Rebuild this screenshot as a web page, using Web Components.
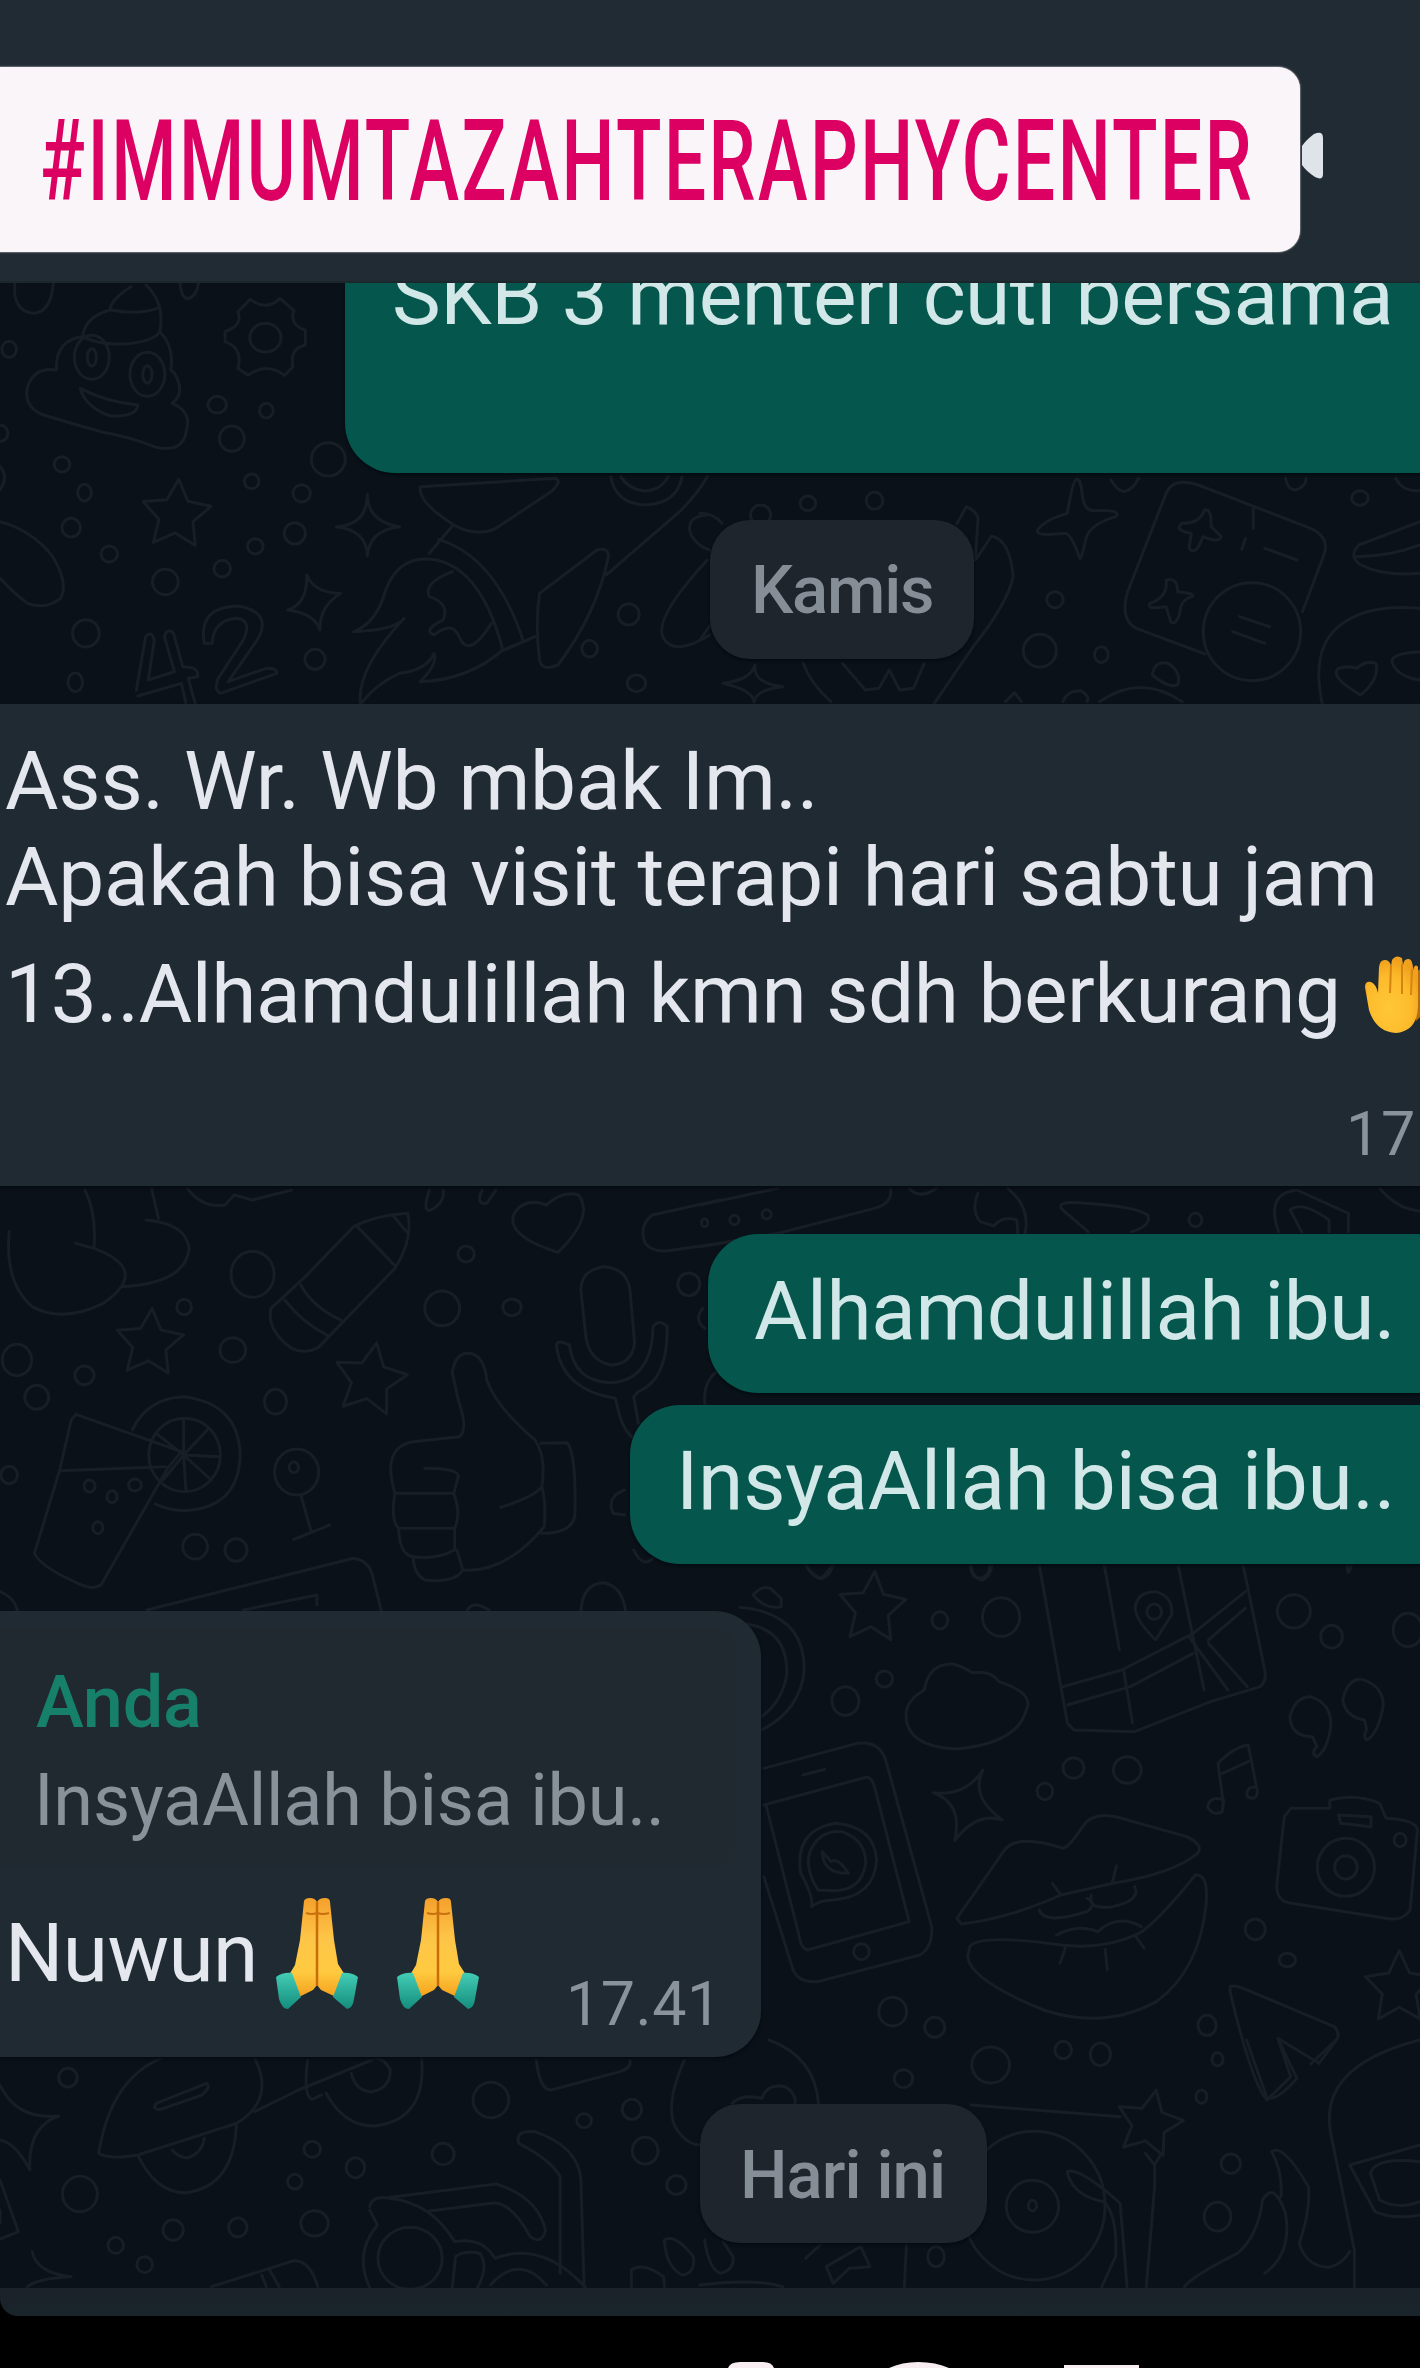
<!DOCTYPE html>
<html lang="id">
<head>
<meta charset="utf-8">
<title>Percakapan</title>
<style>
html,body{margin:0;background:#000}
body{width:1420px;height:2368px;overflow:hidden;font-family:Roboto,"Noto Sans",sans-serif}
</style>
</head>
<body>
<chat-screen></chat-screen>
<script>
const define = (name, html, setup) => {
  const t = document.createElement('template');
  t.innerHTML = html;
  customElements.define(name, class extends HTMLElement {
    connectedCallback() {
      if (this.shadowRoot) return;
      this.attachShadow({mode: 'open'}).append(t.content.cloneNode(true));
      if (setup) setup(this, this.shadowRoot);
    }
  });
};

/* One line of text whose visible glyphs span exactly `w` pixels. */
const ctx = document.createElement('canvas').getContext('2d');
customElements.define('fit-text', class extends HTMLElement {
  connectedCallback() {
    if (this.shadowRoot) return;
    const size = +this.getAttribute('size'), w = +this.getAttribute('w');
    const weight = this.getAttribute('weight') || 400, lh = this.getAttribute('lh');
    const sx = +(this.getAttribute('sx') || 1);
    const text = this.getAttribute('text');
    ctx.font = `${weight} ${size}px Roboto`;
    const m = ctx.measureText(text);
    const ink = m.actualBoundingBoxLeft + m.actualBoundingBoxRight;
    const ls = (w / sx - ink) / (text.length - 1);
    this.attachShadow({mode: 'open'}).innerHTML = `<style>
      :host{display:block;flex:none;width:${w}px;height:${lh}px;white-space:pre}
      span{display:block;width:max-content;font:${weight} ${size}px/${lh}px Roboto,sans-serif;letter-spacing:${ls}px;
        margin-left:${m.actualBoundingBoxLeft * sx}px;transform:scaleX(${sx});transform-origin:0 0}
    </style><span></span>`;
    this.shadowRoot.querySelector('span').textContent = text;
  }
});

/* Doodle wallpaper: groups of line drawings, each in its own coordinate frame. */
const star = (x, y, r, a = 0, k = 1.38) => {
  let d = '';
  for (let i = 0; i < 10; i++) {
    const q = (a - 90 + i * 36) * Math.PI / 180, s = i % 2 ? r * .5 : r;
    d += (i ? 'L' : 'M') + (x + Math.cos(q) * s).toFixed(1) + ' ' + (y + Math.sin(q) * s * k).toFixed(1);
  }
  return d + 'Z';
};
const doodles = [
  {t: 'translate(0 270) scale(.4592 .33333)',
   c: [[20,238,16,24],[473,404,20,25],[580,422,15,22],[505,506,27,38],[715,568,37,50],[135,583,17,23],[184,668,15,25],[548,634,16,22],[657,670,19,26],[155,773,20,28],[238,852,18,24],[556,829,17,23],[642,790,23,32],[360,936,28,38],[484,896,18,25],[187,1090,29,41],[686,1168,22,30],[164,1237,16,28],[1369,1033,23,32],[1284,1136,17,25],[1386,1240,20,25],[578,203,34,43],[200,262,38,66],[321,313,38,66],[200,262,10,26],[321,313,10,26],[2,490,15,24]],
   p: [star(384,735,78,4),
    'M32 40V75Q40 128 75 130Q112 122 116 40M392 40Q395 85 410 87Q430 75 432 40',
    'M285 50Q240 90 240 120Q185 140 180 200Q120 210 123 300Q75 290 60 350Q50 410 95 435Q155 460 225 487Q280 500 340 532Q400 550 406 480Q418 425 375 400Q405 370 380 310L372 300Q380 230 348 185Q360 100 318 45M240 120Q300 135 342 115M180 200Q215 225 270 222Q335 215 348 185M175 355Q230 395 300 405Q300 440 240 438Q185 410 175 355Z',
    'M518 125L545 88Q580 125 610 85L640 122Q630 165 665 180V225Q630 235 638 290L620 316Q580 275 540 316L518 295Q530 235 490 215V185Q530 165 518 125Z',
    'M800 672Q800 755 870 770Q805 780 800 857Q798 780 732 770Q800 765 800 672ZM668 915Q685 970 742 970Q695 1010 697 1080Q685 1030 627 1020Q670 1000 668 915Z',
    'M0 755Q70 780 115 860Q150 940 132 985Q100 1020 60 1000Q30 970 0 925M0 590Q20 620 0 660',
    'M297 1260L317 1100Q330 1080 336 1110L323 1230L380 1205L358 1100Q365 1070 378 1090L398 1190Q435 1190 430 1220L410 1225L425 1300M300 1278L395 1240L405 1300M445 1120Q430 1010 520 1008Q600 1030 555 1120L497 1235L580 1195Q605 1195 603 1210L480 1270Q465 1260 475 1225L530 1110Q550 1050 515 1045Q465 1050 462 1120Z',
    'M915 650L1210 625Q1225 635 1200 665L1080 775Q1040 800 995 770Q910 700 915 650ZM985 768L935 850M770 1085Q820 1060 840 960Q870 850 950 870Q1050 900 1095 1140Q1020 1230 915 1235Q955 1180 945 1150Q930 1200 870 1210Q820 1240 785 1302Q775 1200 880 1045Q860 1080 770 1085ZM955 808Q1080 860 1140 1115L1095 1140M1165 1100L1100 1140M985 905Q920 940 935 980Q980 1000 965 1050Q920 1080 945 1095Q985 1050 1000 1100Q1020 1170 1070 1060',
    'M1175 970L1300 840Q1325 830 1325 860Q1300 1030 1215 1185Q1180 1205 1175 1170Q1165 1060 1175 970ZM1320 915L1480 725Q1520 670 1540 620M1330 620Q1340 700 1405 705Q1475 700 1485 620M1352 620Q1370 660 1405 663Q1440 660 1455 620M1540 870Q1420 1050 1445 1105Q1470 1160 1545 1095M1540 735Q1490 740 1505 795Q1520 830 1545 840']},
  {t: 'translate(700 450) scale(.4592 .33333)',
   c: [[235,160,17,22],[380,152,18,26],[773,449,18,24],[740,602,36,49],[874,614,15,24],[1437,144,18,22],[1202,545,106,147],[132,195,22,30]],
   p: ['M820 88C840 88 820 185 860 182C905 178 915 190 905 200Q845 225 840 270Q830 330 827 325Q808 250 795 250Q730 260 735 240Q750 210 800 190Q812 90 820 88Z',
    'M1015 130Q1030 80 1085 105L1330 235Q1370 260 1360 310L1312 485M1015 130L930 430Q915 510 950 535L1100 612M1205 175V235M1188 265L1180 298',
    'M1098 180Q1115 175 1113 230L1135 260Q1130 280 1095 260Q1080 320 1065 295L1070 250Q1030 240 1050 220Q1090 220 1098 180ZM1015 390Q1040 380 1040 425Q1080 430 1072 440Q1045 450 1045 490Q1035 530 1025 515L1015 470Q970 480 980 460Q1020 440 1015 390ZM1230 295L1300 330M1175 500L1240 530M1160 545L1230 580',
    'M895 90Q910 125 925 125Q945 115 955 85M1275 85Q1280 120 1297 120Q1320 110 1320 85M1515 85Q1530 125 1568 122M560 220L580 170Q610 190 605 215L600 320M600 330L635 258Q675 270 682 380Q670 460 595 590L510 760M225 640Q240 700 285 755M310 640L360 720L390 715L412 660L435 720L465 715L488 640M120 645Q115 700 180 710Q120 720 118 757Q115 720 50 700Q110 690 120 645Z',
    'M1355 760Q1330 600 1390 530Q1450 460 1568 475M1438 735Q1370 680 1390 655Q1415 645 1430 655Q1450 630 1472 640Q1480 690 1438 735ZM1568 605Q1500 610 1508 640Q1520 680 1568 690M1568 215L1435 285Q1410 320 1440 345Q1490 380 1568 370M1430 320Q1500 320 1568 285M985 675Q990 630 1020 640Q1050 670 1040 705Q1020 715 985 675ZM870 755Q960 670 1050 755M790 755Q800 720 830 722Q850 740 843 755M665 755L685 728L700 755M0 190Q30 190 48 220M0 570L25 520']},
  {t: 'translate(0 1180) scale(.4592 .33333)',
   c: [[550,283,47,69],[401,381,16,23],[507,510,28,37],[37,540,32,47],[184,586,21,28],[80,652,26,36],[600,665,24,37],[1015,222,18,24],[963,385,38,52],[1115,382,20,25],[1500,313,24,34],[20,885,18,26],[425,1100,27,37],[514,1110,24,34],[646,876,48,69],[640,862,10,16],[402,825,78,110],[195,918,12,18],[294,915,14,18],[244,950,11,18],[213,1043,11,18]],
   p: [star(326,490,76,4),star(806,600,82,10),
    'M288 750Q320 655 400 650Q520 670 523 825Q520 985 400 992Q365 990 338 972',
    'M20 155Q10 310 70 380Q135 430 225 370Q330 270 205 205L165 190M205 200Q210 100 185 30M265 320Q405 310 412 205Q405 130 318 120M345 115L330 25M408 25Q440 85 490 75L510 45L550 60L635 30',
    'M770 140L665 290L590 385Q580 450 635 505Q665 525 695 500L860 265Q900 180 888 100Q820 105 770 140ZM778 140L862 260M655 315Q680 380 742 420M620 360Q660 430 712 465M855 105L885 155',
    'M1215 217Q1105 170 1118 105Q1140 50 1190 75Q1225 30 1260 45Q1295 110 1215 217ZM1568 60L1420 105Q1390 140 1405 190Q1420 215 1450 213L1568 190',
    'M1265 330Q1265 270 1315 260Q1365 265 1372 330L1382 490Q1375 555 1330 555Q1280 540 1275 460ZM1212 500Q1210 475 1240 495Q1250 605 1330 608Q1420 600 1422 440Q1435 415 1453 440Q1455 600 1390 635L1380 650L1390 730M1212 500Q1225 630 1340 655L1350 710Q1360 750 1375 770',
    'M985 580Q990 515 1025 520Q1055 530 1060 600Q1080 680 1165 780Q1190 830 1180 920Q1190 970 1185 1040Q1100 1180 1008 1170Q990 1210 925 1200Q900 1180 900 1130Q870 1125 868 1045Q850 1020 860 940Q830 800 900 785L1000 770Q1020 750 1000 670ZM925 865Q1000 865 998 890L988 940H860M988 940Q1005 1000 990 1045L868 1045M990 1050V1110Q950 1140 900 1130M995 1110L1008 1170M1180 920Q1165 950 1090 982M1178 790L1235 788Q1255 820 1252 1000Q1250 1060 1180 1060',
    'M165 703L395 815L365 865L220 1215Q200 1235 155 1200Q90 1160 75 1120L130 870L155 720ZM130 872L360 860M400 825V720M400 825L455 745M400 825L478 830M400 825L460 900M400 825L405 935M400 825L355 900M400 825L340 760M655 945L678 1055M640 1078L718 1035',
    'M320 1290L770 1135Q800 1140 810 1180L830 1290M530 1290L690 1245V1275M1265 1290Q1270 1210 1315 1208Q1355 1220 1362 1290M0 1235Q30 1250 38 1290M1018 1290Q1030 1260 1065 1290M935 30Q920 90 935 92Q970 70 965 30M1050 30Q1035 75 1060 70L1080 30M1535 670Q1530 610 1560 575M1530 385Q1510 420 1535 445M1360 930Q1320 950 1335 1000L1360 1005M1380 1110Q1400 1170 1425 1130']},
  {t: 'translate(740 1550) scale(.4337 .33333)',
   c: [[461,211,18,26],[602,201,43,58],[333,387,19,24],[243,453,31,43],[1277,184,38,50],[1364,260,25,34],[769,654,24,31],[893,660,32,40],[703,724,18,25],[1188,1138,23,31],[1262,1230,19,20],[352,1385,32,43],[449,1432,23,30],[1077,1426,21,30],[1540,240,34,50],[955,185,17,23],[1397,952,66,87],[1397,952,26,35],[1522,870,14,20],[280,1205,18,24]],
   p: [star(305,175,80,4),star(1520,1315,82,0),
    'M0 172Q150 190 148 360Q140 480 50 540M0 220Q110 230 108 370Q100 450 50 500M30 135Q50 105 70 115L95 145V170Q60 180 30 135ZM150 45Q175 85 190 85Q210 75 213 45M530 45Q540 90 560 90Q580 75 580 45',
    'M425 420Q435 340 490 342Q515 350 535 368Q580 360 597 395Q680 430 660 480Q640 580 500 597Q380 590 383 490Q385 450 425 420Z',
    'M690 45L755 520L770 540L910 545L1085 455L1200 410Q1215 390 1210 360L1160 45M745 410L880 360L1045 250L1165 125M755 465L900 410L1045 310M840 45L875 300M885 365L905 520M1010 45L1070 420M1035 260L1125 420M1080 280L1170 410M1080 270L1165 175M958 270Q905 200 912 165Q920 125 958 125Q1000 140 995 195Z',
    'M1320 560Q1270 560 1268 500Q1280 440 1315 440Q1365 460 1362 530Q1355 600 1330 620Q1315 610 1330 590ZM1440 510Q1395 500 1390 450Q1400 385 1435 388Q1485 410 1483 470Q1470 555 1445 570Q1435 560 1445 540Z',
    'M1115 765L1102 640Q1140 590 1172 585L1193 725M1112 670L1172 635M1115 750Q1085 735 1078 770Q1090 800 1112 785ZM1190 710Q1165 710 1170 740Q1190 755 1193 725',
    'M55 655L270 580Q325 570 338 640L442 1130Q445 1190 415 1215L180 1295Q130 1300 120 1250L55 980M55 765L290 682Q305 680 312 720L390 1115L155 1200Q140 1195 135 1150L60 765M145 675L195 658M165 1070Q170 1040 140 970Q125 840 220 820Q310 830 315 930Q310 1040 215 1050Q185 1050 165 1070ZM180 1020Q150 960 160 910Q180 840 235 845Q290 870 290 940Q280 1020 220 1022ZM190 905Q190 970 250 970Q225 920 210 935Z',
    'M560 660Q530 740 605 810Q545 785 495 872Q515 760 445 728Q520 740 560 660Z',
    'M500 1105L610 900Q640 850 745 895Q760 890 790 830Q815 780 880 805L1030 860Q1070 885 1055 910Q1000 970 860 1000L740 1035Q620 1105 510 1122ZM530 1190Q550 1150 740 1185Q840 1200 920 1150Q960 1120 1050 975Q1080 970 1075 1060Q1060 1260 960 1355Q840 1440 700 1380Q530 1290 525 1220ZM720 1000L740 1035M868 948L858 1000M690 1080Q700 1125 800 1085Q825 1060 800 1045M810 1035Q800 1080 860 1070Q925 1050 910 1010M730 1155Q780 1120 825 1145Q870 1090 925 1130M750 1195L738 1240M842 1198L847 1260M910 1155L932 1195',
    'M1270 775H1360V750Q1420 730 1475 760L1490 805Q1560 810 1562 840L1545 1080Q1530 1110 1500 1107L1265 1058Q1235 1050 1238 1000L1255 800ZM1380 795L1455 800V830L1385 820ZM1130 1310Q1140 1305 1160 1315L1370 1430Q1385 1450 1375 1470L1335 1540L1240 1465L1270 1580L1215 1650Q1180 1600 1130 1325ZM1400 45Q1400 90 1410 45']},
  {t: 'translate(0 2040) scale(.4592 .33333)',
   c: [[148,113,20,28],[174,462,38,53],[1069,180,39,53],[1272,242,16,21],[1376,208,21,30],[680,328,18,24],[774,383,20,30],[965,342,24,32],[642,425,16,22],[1405,332,28,40],[1473,435,21,28],[377,570,22,31],[518,562,20,28],[685,550,30,38],[252,616,17,24],[315,674,17,24],[893,655,70,93]],
   p: ['M350 55Q240 120 215 340Q235 360 300 345L515 250Q600 180 555 55M555 215L650 150L810 60M340 190L450 130Q460 140 440 165L350 208Q330 210 340 190ZM300 345Q340 460 405 458Q510 440 515 250M375 330Q390 355 410 353Q440 340 445 295M670 60Q660 170 680 178L700 165M710 160Q750 260 815 258Q930 240 918 55M765 100Q775 155 810 155Q850 145 850 90Q840 60 820 55',
    'M0 135Q35 240 128 228Q60 260 65 390Q35 310 0 300M0 420L40 575L0 597M0 510V550M70 635Q80 700 155 710Q80 715 60 740',
    'M1168 60Q1175 150 1200 150L1350 95Q1375 85 1372 60M1490 60Q1440 220 1480 280Q1500 315 1525 315',
    'M1220 700L1220 410Q1200 360 1130 310Q1120 270 1165 275Q1260 320 1265 420L1272 740M805 500Q810 465 850 475Q940 490 990 605Q1050 590 1078 655Q1180 600 1275 742M850 472L1080 432Q1170 470 1188 570Q1180 615 1155 590Q1110 480 1070 490L935 513M805 510L822 555Q770 640 805 742M985 742L992 650Q1010 630 1045 640Q1065 680 1040 742M1068 735Q1130 640 1190 735',
    'M460 740L640 662Q675 660 692 740M585 685L608 740M570 705L580 740M1447 600Q1470 580 1510 650Q1515 700 1485 705Q1450 680 1447 600ZM1375 690Q1400 665 1445 710L1447 740M1375 690V740']},
  {t: 'translate(700 2040) scale(.4592 .33333)',
   c: [[443,116,20,27],[633,75,41,54],[791,30,18,26],[872,43,22,34],[1156,371,21,29],[1127,530,29,43],[1127,58,12,20],[1092,170,12,20],[514,650,18,30],[727,497,155,223],[724,499,57,78],[724,497,9,16]],
   p: [star(978,252,75,12),
    'M150 0Q250 50 258 190M70 190Q90 160 135 175Q145 130 185 140Q210 160 207 190M590 195L915 230M1190 0L1235 175Q1260 180 1300 115L1260 0M1330 72L1385 0',
    'M990 370V440L972 740M970 340L990 375L1005 340M800 395Q825 380 915 490L930 740M800 400Q815 470 880 485Q910 530 905 650L875 740M1568 0Q1340 80 1375 290L1425 630V740M1568 315L1415 375L1470 515Q1510 540 1568 525M1568 365Q1470 350 1460 400L1480 480Q1520 510 1568 485',
    'M1245 335Q1270 310 1325 440Q1330 510 1305 610Q1320 680 1370 682Q1400 670 1415 635M1055 740Q1070 710 1170 640Q1215 590 1225 480Q1250 420 1275 520Q1290 640 1230 700M1245 335Q1270 400 1265 470M230 655L265 610M350 620L370 680L325 685L290 730L275 680ZM450 605L445 740M10 600Q20 690 45 700Q75 690 72 650L50 605M0 735Q120 715 180 740']},
  {t: 'translate(700 1180) scale(.4592 .33333)', c: [[1079,120,14,20],[10,128,7,12],[75,120,10,14],[145,103,10,14]],
   p: ['M0 75L170 25M415 25Q420 70 380 85L170 160L0 200M455 25Q480 60 515 25M605 40Q590 90 610 125L640 138Q660 105 690 120L692 160M670 25Q720 80 708 160M845 155L790 90Q770 60 840 70Q950 80 975 105Q985 135 940 155M1260 155Q1230 40 1300 30L1412 100V155M1310 155L1285 90Q1310 60 1370 120V155M1480 25Q1520 90 1568 93M230 1155Q250 1200 265 1195L290 1155M590 1155Q590 1195 610 1195Q630 1190 632 1155']}
];
define('doodle-wallpaper', `<style>
  :host{display:block;position:absolute;inset:0}
  svg{display:block;width:1420px;height:2005px;fill:none;stroke:#171e26;stroke-width:3;stroke-linejoin:round;stroke-linecap:round}
  path,ellipse{vector-effect:non-scaling-stroke}
</style><svg viewBox="0 283 1420 2005" aria-hidden="true"></svg>`, (el, root) => {
  root.querySelector('svg').innerHTML = doodles.map(g => `<g transform="${g.t}">` +
    g.c.map(([x, y, a, b]) => `<ellipse cx="${x}" cy="${y}" rx="${a}" ry="${b}"/>`).join('') +
    g.p.map(d => `<path d="${d}"/>`).join('') + '</g>').join('');
});

define('hashtag-sticker', `<style>
  :host{display:flex;box-sizing:border-box;width:1320px;height:185px;margin-left:-20px;padding:29px 0 0 63px;
    border-radius:22px;background:#faf5f8;color:#dc0062;box-shadow:0 0 2px #f9f4f7;flex:none}
</style><fit-text text="#IMMUMTAZAHTERAPHYCENTER" size="114" weight="500" w="1208" lh="130" sx=".655"></fit-text>`);

define('chat-header', `<style>
  :host{display:flex;align-items:flex-start;box-sizing:border-box;height:283px;padding-top:67px;background:#202b33;border-bottom:2px solid #1c262d}
  svg{flex:none;margin:65px 0 0 2px}
</style><hashtag-sticker></hashtag-sticker>
<svg width="22" height="48" viewBox="0 0 22 48"><path d="M0 14Q4 8 12 2Q21-2 21 6V42Q21 49 13 45Q4 39 0 33Z" fill="#dfe3ea"/></svg>`);

define('date-chip', `<style>
  :host{display:flex;box-sizing:border-box;height:139px;width:var(--w);padding-left:var(--pad);margin-left:var(--x);
    border-radius:40px;background:#1e252c;color:#858e97;box-shadow:0 2px 3px #060b11}
</style><slot></slot>`);

define('sent-bubble', `<style>
  :host{display:flex;box-sizing:border-box;height:var(--h,159px);margin-left:var(--x);padding-left:var(--pad);
    border-radius:var(--r,50px 0 0 50px);background:#05564d;color:#d2e8e8;box-shadow:0 2px 3px #040c12}
</style><slot></slot>`);

define('raised-hand', `<style>:host{display:block;flex:none}svg{display:block}</style>
<svg width="75" height="80" viewBox="0 0 75 80">
<defs><radialGradient id="h" cx=".45" cy=".68" r=".65"><stop offset="0" stop-color="#ffc737"/><stop offset=".65" stop-color="#fdbb2c"/><stop offset="1" stop-color="#f0a01d"/></radialGradient></defs>
<path d="M51 20Q53 11 62 15V55L51 66Z" fill="#b96d08"/>
<path d="M0 32Q0 26 6 27Q11 29 13 38L14 12Q15 4 21 5Q25 6 26 11L27 5Q31-1 37 3L38 10Q39 3 44 4Q48 5 48 15Q50 8 53 12L53 52Q52 76 31 78Q11 77 4 55Z" fill="url(#h)"/>
<path d="M26 10L25 38M37 9V39M47 14L46 40" fill="none" stroke="#d5850f" stroke-width="2"/></svg>`);

define('folded-hands', `<style>:host{display:block;flex:none}svg{display:block}</style>
<svg width="82" height="111" viewBox="0 0 82 111">
<defs><linearGradient id="s" x1="0" y1="0" x2="0" y2="1"><stop offset="0" stop-color="#f5a02c"/><stop offset=".4" stop-color="#fdc548"/><stop offset=".75" stop-color="#ffca40"/><stop offset="1" stop-color="#f3a01c"/></linearGradient>
<linearGradient id="c" x1="0" y1="0" x2="0" y2="1"><stop offset="0" stop-color="#43cdb5"/><stop offset="1" stop-color="#148d7d"/></linearGradient></defs>
<path d="M28 3Q29 0 34 0Q39 0 41 4Q43 0 49 0Q54 0 54 4L58 42L62 66L69 77L60 99L45 92L41 87L37 92L23 99L13 77L19 67L24 42Z" fill="url(#s)"/>
<path d="M41 4V88" stroke="#c96d0b" stroke-width="2.5"/><path d="M30 15Q36 17 41 15Q47 17 53 15" fill="none" stroke="#c8700f" stroke-width="2"/>
<path d="M0 79Q7 74 16 75L25 99L12 111Q6 111 3 101ZM82 79Q75 74 66 75L57 99L71 111Q77 110 78 101Z" fill="url(#c)"/></svg>`);

define('received-message', `<style>
  :host{display:flex;flex-direction:column;box-sizing:border-box;height:482px;padding:29px 0 0 6px;background:#202a32;color:#e4e7ee;box-shadow:0 2px 3px #060b11}
  .last{display:flex;align-items:flex-start;margin:21px 0 0 5px}
  raised-hand{margin:9px 0 -9px 29px}
  .time{margin:56px 0 0 1345px;color:#8a939b}
</style>
<fit-text text="Ass. Wr. Wb mbak Im.." size="82" w="806" lh="96"></fit-text>
<fit-text text="Apakah bisa visit terapi hari sabtu jam" size="82" w="1367" lh="96"></fit-text>
<div class="last"><fit-text text="13..Alhamdulillah kmn sdh berkurang" size="82" w="1325" lh="96"></fit-text><raised-hand></raised-hand></div>
<fit-text class="time" text="17" size="61" w="62" lh="72"></fit-text>`);

define('reply-message', `<style>
  :host{display:flex;flex-direction:column;box-sizing:border-box;width:761px;height:446px;padding-top:17px;border-radius:0 46px 46px 0;background:#202a32;box-shadow:0 2px 3px #060b11}
  .quote{display:flex;flex-direction:column;gap:14px;box-sizing:border-box;width:736px;height:238px;padding:33px 0 0 36px;border-radius:0 24px 24px 0;background:#20292f;color:#89929a}
  .name{color:#16806a}
  .quote fit-text+fit-text{margin-left:4px}
  .body{display:flex;align-items:flex-start;margin-top:39px;padding-left:11px;color:#e4e7ee}
  folded-hands{margin:-7px 0 0 23px}
  folded-hands+folded-hands{margin-left:39px}
  .time{margin:63px 0 0 92px;color:#8a939b}
</style>
<div class="quote"><fit-text class="name" text="Anda" size="72" weight="500" w="163" lh="84"></fit-text><fit-text text="InsyaAllah bisa ibu.." size="72" w="620" lh="84"></fit-text></div>
<div class="body"><fit-text text="Nuwun" size="82" w="242" lh="96"></fit-text><folded-hands></folded-hands><folded-hands></folded-hands><fit-text class="time" text="17.41" size="61" w="138" lh="72"></fit-text></div>`);

define('chat-body', `<style>
  :host{display:block;position:relative;height:2005px;overflow:hidden;background:#0a1119}
  main{display:flex;flex-direction:column;position:relative}
</style>
<doodle-wallpaper></doodle-wallpaper>
<main>
<sent-bubble style="--x:345px;--pad:50px;--h:190px;--r:0 0 0 50px"><fit-text text="SKB 3 menteri cuti bersama" size="82" w="995" lh="26"></fit-text></sent-bubble>
<date-chip style="--x:710px;--pad:45px;--w:264px;margin-top:47px"><fit-text text="Kamis" size="67" weight="500" w="177" lh="140"></fit-text></date-chip>
<received-message style="margin-top:45px"></received-message>
<sent-bubble style="--x:708px;--pad:47px;margin-top:48px"><fit-text text="Alhamdulillah ibu." size="82" w="634" lh="154"></fit-text></sent-bubble>
<sent-bubble style="--x:630px;--pad:53px;margin-top:12px"><fit-text text="InsyaAllah bisa ibu.." size="82" w="706" lh="152"></fit-text></sent-bubble>
<reply-message style="margin-top:47px"></reply-message>
<date-chip style="--x:700px;--pad:44px;--w:287px;margin-top:47px"><fit-text text="Hari ini" size="67" weight="500" w="199" lh="142"></fit-text></date-chip>
</main>`);

define('bottom-strip', `<style>
  :host{display:block;height:80px;overflow:hidden;background:#000}
  .edge{height:28px;border-radius:0 0 0 18px;background:linear-gradient(#1b2229,#19242b)}
  svg{display:block;margin-top:46px}
</style><div class="edge"></div>
<svg width="1420" height="6" viewBox="0 0 1420 6" fill="#f8edf1"><path d="M728 6Q730 0 740 0H763Q772 0 774 6ZM889 6Q902 0 918 0Q936 0 949 6ZM1064 3H1139V6H1064Z"/></svg>`);

define('chat-screen', `<style>:host{display:flex;flex-direction:column;width:1420px;height:2368px;overflow:hidden}
chat-header,chat-body,bottom-strip{flex:none}</style>
<chat-header></chat-header><chat-body></chat-body><bottom-strip></bottom-strip>`);
</script>
</body>
</html>
